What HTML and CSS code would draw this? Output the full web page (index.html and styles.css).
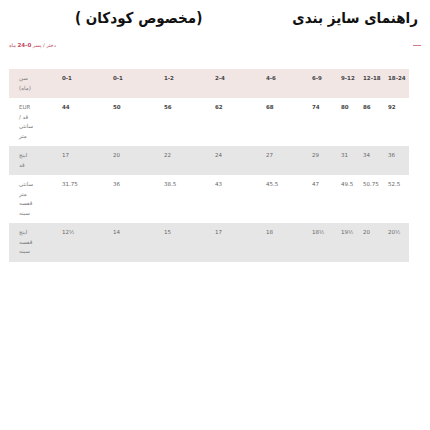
FILE: index.html
```html
<!DOCTYPE html>
<html lang="fa">
<head>
<meta charset="utf-8">
<link rel="stylesheet" href="styles.css">
</head>
<body>
<div class="page">
  <h1 class="title" dir="rtl"><span>راهنمای سایز بندی</span><span>(مخصوص کودکان )</span></h1>
  <div class="crumbs">
    <span class="crumb" dir="rtl">دختر / پسر <b>0-24</b> ماه</span>
    <span class="dash"></span>
  </div>
  <div class="table">
    <div class="row head">
      <div class="cell label" dir="rtl">سن (ماه)</div>
      <div class="cell">0-1</div><div class="cell">0-1</div><div class="cell">1-2</div><div class="cell">2-4</div><div class="cell">4-6</div><div class="cell">6-9</div><div class="cell">9-12</div><div class="cell">12-18</div><div class="cell">18-24</div>
    </div>
    <div class="row bold">
      <div class="cell label" dir="rtl"><span dir="ltr">EUR</span> قد / سانتی متر</div>
      <div class="cell">44</div><div class="cell">50</div><div class="cell">56</div><div class="cell">62</div><div class="cell">68</div><div class="cell">74</div><div class="cell">80</div><div class="cell">86</div><div class="cell">92</div>
    </div>
    <div class="row grey">
      <div class="cell label" dir="rtl">اینچ قد</div>
      <div class="cell">17</div><div class="cell">20</div><div class="cell">22</div><div class="cell">24</div><div class="cell">27</div><div class="cell">29</div><div class="cell">31</div><div class="cell">34</div><div class="cell">36</div>
    </div>
    <div class="row">
      <div class="cell label" dir="rtl">سانتی متر قفسه سینه</div>
      <div class="cell">31.75</div><div class="cell">36</div><div class="cell">38.5</div><div class="cell">43</div><div class="cell">45.5</div><div class="cell">47</div><div class="cell">49.5</div><div class="cell">50.75</div><div class="cell">52.5</div>
    </div>
    <div class="row grey">
      <div class="cell label" dir="rtl">اینچ قفسه سینه</div>
      <div class="cell">12½</div><div class="cell">14</div><div class="cell">15</div><div class="cell">17</div><div class="cell">18</div><div class="cell">18½</div><div class="cell">19½</div><div class="cell">20</div><div class="cell">20½</div>
    </div>
  </div>
</div>
</body>
</html>
```
FILE: styles.css
```css
html, body {
  margin: 0;
  padding: 0;
  background: #ffffff;
}
.page {
  padding: 6px 12px 0 9px;
  font-family: "DejaVu Sans", "Noto Sans", sans-serif;
  color: #555;
}
.title {
  margin: 0;
  display: flex;
  justify-content: flex-start;
  gap: 90px;
  font-size: 15px;
  line-height: 24px;
  font-weight: bold;
  font-stretch: condensed;
  color: #111;
  white-space: nowrap;
}
.crumbs {
  display: flex;
  justify-content: space-between;
  align-items: center;
  margin-top: 11px;
  height: 8px;
}
.crumb {
  font-size: 5px;
  color: #c0465a;
  white-space: nowrap;
}
.crumb b {
  font-weight: bold;
  font-size: 5.5px;
}
.dash {
  width: 8px;
  height: 1px;
  background: #d77a86;
  margin-right: -3px;
}
.table {
  margin-top: 20px;
  width: 400px;
  font-size: 5.5px;
  line-height: 9.5px;
  color: #666;
}
.row {
  display: grid;
  grid-template-columns: 43px 51px 51px 51px 51px 46px 29px 22px 25px 31px;
}
.row.head {
  background: #f2e6e5;
  color: #444;
  font-weight: 600;
}
.row.bold {
  color: #444;
  font-weight: 600;
}
.row.grey {
  background: #e6e6e6;
}
.cell {
  padding: 5px 0 5px 10px;
  white-space: nowrap;
}
.cell.label {
  font-weight: normal;
  color: #777;
  text-align: left;
  width: 14px;
  padding-left: 10px;
  white-space: normal;
}
```
